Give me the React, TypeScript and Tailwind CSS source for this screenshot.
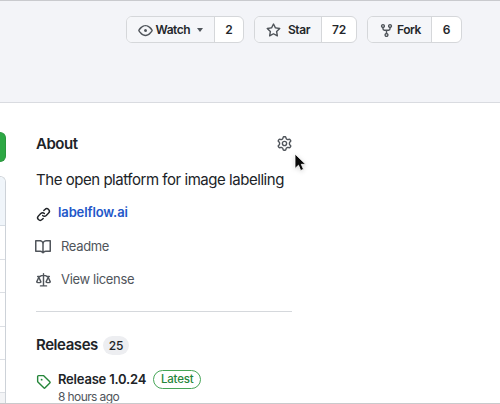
import type { ReactNode } from "react";

const paths = {
  eye: "M1.679 7.932c.412-.621 1.242-1.75 2.366-2.717C5.175 4.242 6.527 3.5 8 3.5c1.473 0 2.824.742 3.955 1.715 1.124.967 1.954 2.096 2.366 2.717a.119.119 0 010 .136c-.412.621-1.242 1.75-2.366 2.717C10.825 11.758 9.473 12.5 8 12.5c-1.473 0-2.824-.742-3.955-1.715C2.92 9.818 2.09 8.69 1.679 8.068a.119.119 0 010-.136zM8 2c-1.981 0-3.67.992-4.933 2.078C1.797 5.169.88 6.423.43 7.1a1.619 1.619 0 000 1.798c.45.678 1.367 1.932 2.637 3.024C4.329 13.008 6.019 14 8 14c1.981 0 3.67-.992 4.933-2.078 1.27-1.091 2.187-2.345 2.637-3.023a1.619 1.619 0 000-1.798c-.45-.678-1.367-1.932-2.637-3.023C11.671 2.992 9.981 2 8 2zm0 7.6a1.6 1.6 0 100-3.2 1.6 1.6 0 000 3.2z",
  star: "M8 .25a.75.75 0 01.673.418l1.882 3.815 4.21.612a.75.75 0 01.416 1.279l-3.046 2.97.719 4.192a.75.75 0 01-1.088.791L8 12.347l-3.766 1.98a.75.75 0 01-1.088-.79l.72-4.194L.818 6.374a.75.75 0 01.416-1.28l4.21-.611L7.327.668A.75.75 0 018 .25zm0 2.445L6.615 5.5a.75.75 0 01-.564.41l-3.097.45 2.24 2.184a.75.75 0 01.216.664l-.528 3.084 2.769-1.456a.75.75 0 01.698 0l2.77 1.456-.53-3.084a.75.75 0 01.216-.664l2.24-2.183-3.096-.45a.75.75 0 01-.564-.41L8 2.694v.001z",
  fork: "M5 3.25a.75.75 0 11-1.5 0 .75.75 0 011.5 0zm0 2.122a2.25 2.25 0 10-1.5 0v.878A2.25 2.25 0 005.75 8.5h1.5v2.128a2.251 2.251 0 101.5 0V8.5h1.5a2.25 2.25 0 002.25-2.25v-.878a2.25 2.25 0 10-1.5 0v.878a.75.75 0 01-.75.75h-4.5A.75.75 0 015 6.25v-.878zm3.75 7.378a.75.75 0 11-1.5 0 .75.75 0 011.5 0zm3-8.75a.75.75 0 100-1.5.75.75 0 000 1.5z",
  link: "M7.775 3.275a.75.75 0 001.06 1.06l1.25-1.25a2 2 0 112.83 2.83l-2.5 2.5a2 2 0 01-2.83 0 .75.75 0 00-1.06 1.06 3.5 3.5 0 004.95 0l2.5-2.5a3.5 3.5 0 00-4.95-4.95l-1.25 1.25zm-4.69 9.64a2 2 0 010-2.83l2.5-2.5a2 2 0 012.83 0 .75.75 0 001.06-1.06 3.5 3.5 0 00-4.95 0l-2.5 2.5a3.5 3.5 0 004.95 4.95l1.25-1.25a.75.75 0 00-1.06-1.06l-1.25 1.25a2 2 0 01-2.83 0z",
  book: "M0 1.75A.75.75 0 01.75 1h4.253c1.227 0 2.317.59 3 1.501A3.744 3.744 0 0111.006 1h4.245a.75.75 0 01.75.75v10.5a.75.75 0 01-.75.75h-4.507a2.25 2.25 0 00-1.591.659l-.622.621a.75.75 0 01-1.06 0l-.622-.621A2.25 2.25 0 005.258 13H.75a.75.75 0 01-.75-.75V1.75zm8.755 3a2.25 2.25 0 012.25-2.25H14.5v9h-3.757c-.71 0-1.4.201-1.992.572l.004-7.322zm-1.504 7.324l.004-5.073-.002-2.253A2.25 2.25 0 005.003 2.5H1.5v9h3.757a3.75 3.75 0 011.994.574z",
  law: "M8.75.75a.75.75 0 00-1.5 0V2h-.984c-.305 0-.604.08-.869.23l-1.288.737A.25.25 0 013.984 3H1.75a.75.75 0 000 1.5h.428L.066 9.192a.75.75 0 00.154.838l.53-.53-.53.53v.001l.002.002.002.002.006.006.016.015.045.04a3.514 3.514 0 00.686.45A4.492 4.492 0 003 11c.88 0 1.556-.22 2.023-.454a3.515 3.515 0 00.686-.45l.045-.04.016-.015.006-.006.002-.002.001-.002L5.25 9.5l.53.53a.75.75 0 00.154-.838L3.822 4.5h.162c.305 0 .604-.08.869-.23l1.289-.737a.25.25 0 01.124-.033h.984V13h-2.5a.75.75 0 000 1.5h6.5a.75.75 0 000-1.5h-2.5V3.5h.984a.25.25 0 01.124.033l1.29.736c.264.152.563.231.868.231h.162l-2.112 4.692a.75.75 0 00.154.838l.53-.53-.53.53v.001l.002.002.002.002.006.006.016.015.045.04a3.517 3.517 0 00.686.45A4.492 4.492 0 0013 11c.88 0 1.556-.22 2.023-.454a3.512 3.512 0 00.686-.45l.045-.04.01-.01.006-.005.006-.006.002-.002.001-.002-.529-.531.53.53a.75.75 0 00.154-.838L13.823 4.5h.427a.75.75 0 000-1.5h-2.234a.25.25 0 01-.124-.033l-1.29-.736A1.75 1.75 0 009.735 2H8.75V.75zM1.695 9.227c.285.135.718.273 1.305.273s1.02-.138 1.305-.273L3 6.327l-1.305 2.9zm10 0c.285.135.718.273 1.305.273s1.02-.138 1.305-.273L13 6.327l-1.305 2.9z",
  tag: "M2.5 7.775V2.75a.25.25 0 01.25-.25h5.025a.25.25 0 01.177.073l6.25 6.25a.25.25 0 010 .354l-5.025 5.025a.25.25 0 01-.354 0l-6.25-6.25a.25.25 0 01-.073-.177zm-1.5 0V2.75C1 1.784 1.784 1 2.75 1h5.025c.464 0 .91.184 1.238.513l6.25 6.25a1.75 1.75 0 010 2.474l-5.026 5.026a1.75 1.75 0 01-2.474 0l-6.25-6.25A1.75 1.75 0 011 7.775zM6 5a1 1 0 100 2 1 1 0 000-2z",
  gear: "M7.429 1.525a6.593 6.593 0 011.142 0c.036.003.108.036.137.146l.289 1.105c.147.56.55.967.997 1.189.174.086.341.183.501.29.417.278.97.423 1.53.27l1.102-.303c.11-.03.175.016.195.046.219.31.41.641.573.989.014.031.022.11-.059.19l-.815.806c-.411.406-.562.957-.53 1.456a4.588 4.588 0 010 .582c-.032.499.119 1.05.53 1.456l.815.806c.08.08.073.159.059.19a6.494 6.494 0 01-.573.99c-.02.029-.086.074-.195.045l-1.103-.303c-.559-.153-1.112-.008-1.529.27-.16.107-.327.204-.5.29-.449.222-.851.628-.998 1.189l-.289 1.105c-.029.11-.101.143-.137.146a6.613 6.613 0 01-1.142 0c-.036-.003-.108-.037-.137-.146l-.289-1.105c-.147-.56-.55-.967-.997-1.189a4.502 4.502 0 01-.501-.29c-.417-.278-.97-.423-1.53-.27l-1.102.303c-.11.03-.175-.016-.195-.046a6.492 6.492 0 01-.573-.989c-.014-.031-.022-.11.059-.19l.815-.806c.411-.406.562-.957.53-1.456a4.587 4.587 0 010-.582c.032-.499-.119-1.05-.53-1.456l-.815-.806c-.08-.08-.073-.159-.059-.19a6.44 6.44 0 01.573-.99c.02-.029.086-.075.195-.045l1.103.303c.559.153 1.112.008 1.529-.27.16-.107.327-.204.5-.29.449-.222.851-.628.998-1.189l.289-1.105c.029-.11.101-.143.137-.146zM8 0c-.236 0-.47.01-.701.03-.743.065-1.29.615-1.458 1.261l-.29 1.106c-.017.066-.078.158-.211.224a5.994 5.994 0 00-.668.386c-.123.082-.233.09-.3.071L3.27 2.776c-.644-.177-1.392.02-1.82.63a7.977 7.977 0 00-.704 1.217c-.315.675-.111 1.422.363 1.891l.815.806c.05.048.098.147.088.294a6.084 6.084 0 000 .772c.01.147-.038.246-.088.294l-.815.806c-.474.469-.678 1.216-.363 1.891.2.428.436.835.704 1.218.428.609 1.176.806 1.82.63l1.103-.303c.066-.019.176-.011.299.071.213.143.436.272.668.386.133.066.194.158.212.224l.289 1.106c.169.646.715 1.196 1.458 1.26a8.094 8.094 0 001.402 0c.743-.064 1.29-.614 1.458-1.26l.29-1.106c.017-.066.078-.158.211-.224a5.98 5.98 0 00.668-.386c.123-.082.233-.09.3-.071l1.102.302c.644.177 1.392-.02 1.82-.63.268-.382.505-.789.704-1.217.315-.675.111-1.422-.364-1.891l-.814-.806c-.05-.048-.098-.147-.088-.294a6.1 6.1 0 000-.772c-.01-.147.039-.246.088-.294l.814-.806c.475-.469.679-1.216.364-1.891a7.992 7.992 0 00-.704-1.218c-.428-.609-1.176-.806-1.82-.63l-1.103.303c-.066.019-.176.011-.299-.071a5.991 5.991 0 00-.668-.386c-.133-.066-.194-.158-.212-.224L10.16 1.29C9.99.645 9.444.095 8.701.031A8.094 8.094 0 008 0zm1.5 8a1.5 1.5 0 11-3 0 1.5 1.5 0 013 0zM11 8a3 3 0 11-6 0 3 3 0 016 0z",
};

function Icon({ name, className }: { name: keyof typeof paths; className: string }) {
  return (
    <svg viewBox="0 0 16 16" fill="currentColor" fillRule="evenodd" className={`shrink-0 overflow-visible ${className}`}>
      <path d={paths[name]} />
    </svg>
  );
}

function CountButton({ className, labelClass, count, children }: { className: string; labelClass: string; count: string; children: ReactNode }) {
  return (
    <div className={`flex h-[27px] shrink-0 overflow-hidden rounded-md border border-[#d5d7da] bg-white text-[12px] font-semibold text-[#24272b] ${className}`}>
      <button className={`flex shrink-0 items-center border-r border-[#d5d7da] bg-[#f5f6f9] tracking-[-0.45px] ${labelClass}`}>{children}</button>
      <span className="flex flex-1 items-center justify-center tracking-[-0.2px]">{count}</span>
    </div>
  );
}

export default function App() {
  return (
    <div className="relative flex h-[404px] w-[500px] flex-col overflow-hidden border-b border-[#c9cacc] bg-white font-['Inter','Liberation_Sans',sans-serif] text-[#202327]">
      <header className="flex h-[103px] shrink-0 items-start border-t border-b border-t-[#c9cace] border-b-[#d9dbe0] bg-[#f3f4f8] pt-[15px] pl-[126px]">
        <CountButton className="w-[118px]" labelClass="w-[88px] pl-[10.5px]" count="2">
          <Icon name="eye" className="mt-px mr-[3px] size-[15px] text-[#50555b]" />
          Watch
          <span className="ml-[7px] border-x-[3.5px] border-t-4 border-x-transparent border-t-[#50555b]" />
        </CountButton>
        <CountButton className="ml-[10px] w-[103px]" labelClass="w-[67px] pl-[11px]" count="72">
          <Icon name="star" className="mt-px mr-[7px] size-[15px] text-[#50555b]" />
          Star
        </CountButton>
        <CountButton className="ml-[10px] w-[95px]" labelClass="w-[64px] pl-[11px]" count="6">
          <Icon name="fork" className="mt-px mr-[3px] size-[15px] text-[#50555b]" />
          Fork
        </CountButton>
      </header>

      <div className="flex min-h-0 flex-1">
        <div className="flex w-[6px] shrink-0 flex-col pt-[29px]">
          <div className="h-[30px] shrink-0 rounded-r-md border border-l-0 border-[#2b963e] bg-[#2da844]" />
          <div className="mt-[14px] flex flex-1 flex-col rounded-tr-md border-t border-r border-[#cdd2d8]">
            <div className="h-[49px] shrink-0 rounded-tr-md border-b border-[#d5dce3] bg-[#f0f5fa]" />
            <div className="h-[34px] shrink-0 border-b border-[#dcdfe4]" />
            <div className="h-[33px] shrink-0 border-b border-[#dcdfe4]" />
            <div className="h-[34px] shrink-0 border-b border-[#dcdfe4]" />
            <div className="h-[33px] shrink-0 border-b border-[#dcdfe4]" />
            <div className="h-[33px] shrink-0 border-b border-[#dcdfe4]" />
            <div className="flex-1 bg-[#f3f4f6]" />
          </div>
        </div>

        <aside className="ml-[30px] w-[256px] shrink-0 pt-[29px]">
          <div className="flex h-6 items-center justify-between">
            <h2 className="text-[15px] font-semibold tracking-[-0.45px]">About</h2>
            <Icon name="gear" className="-mt-px size-[15px] text-[#50555b]" />
          </div>
          <p className="mt-3 h-6 text-[15px] leading-6 tracking-[-0.46px] whitespace-nowrap">The open platform for image labelling</p>
          <div className="mt-[9px] flex h-6 items-center">
            <Icon name="link" className="mt-[2px] mr-[7px] size-[15px]" />
            <a className="text-[13px] font-semibold tracking-[-0.12px] text-[#2357c9]">labelflow.ai</a>
          </div>
          <div className="mt-[10px] flex h-6 items-center text-[#50555b]">
            <Icon name="book" className="-ml-px mr-[10px] size-[16px]" />
            <span className="text-[13px] tracking-[-0.35px]">Readme</span>
          </div>
          <div className="mt-[9px] flex h-6 items-center text-[#50555b]">
            <Icon name="law" className="mr-[10px] size-[15px]" />
            <span className="text-[13px] tracking-[-0.33px]">View license</span>
          </div>
          <div className="mt-[19px] h-px bg-[#d5d8dc]" />
          <div className="mt-[21px] flex h-6 items-center">
            <h2 className="text-[15px] font-semibold tracking-[-0.43px]">Releases</h2>
            <span className="mt-px ml-[5px] flex h-[19px] w-[26px] items-center justify-center rounded-full bg-[#edeef1] text-[12px] font-medium tracking-[-0.3px]">25</span>
          </div>
          <div className="mt-[12px] flex">
            <Icon name="tag" className="mt-[5px] mr-[7px] size-[15px] text-[#25863a]" />
            <div>
              <div className="flex h-[21px] items-center">
                <span className="text-[13px] font-semibold tracking-[-0.2px] whitespace-nowrap">Release 1.0.24</span>
                <span className="ml-[7px] flex h-[19px] w-[48px] items-center justify-center rounded-full border border-[#46a557] text-[11.5px] font-medium tracking-[-0.2px] text-[#25863a]">Latest</span>
              </div>
              <p className="-mt-px text-[12px] leading-4 tracking-[-0.6px] text-[#50555b]">8 hours ago</p>
            </div>
          </div>
        </aside>
      </div>

      <svg viewBox="0 0 12 19" className="absolute top-[153px] left-[294px] h-[19px] w-[12px] drop-shadow-sm">
        <path d="M1 1v14.5l3.5-3.3 2.2 5.3 2.8-1.2-2.2-5h4.3z" fill="#080808" stroke="#fff" strokeWidth=".8" />
      </svg>
    </div>
  );
}
